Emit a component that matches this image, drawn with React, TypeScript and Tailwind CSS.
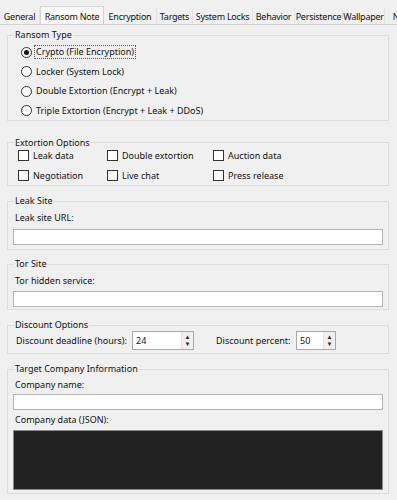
import React from "react";

const font = { fontFamily: '"Noto Sans", "Open Sans", sans-serif' };

function Tab({ label, w, selected }: { label: string; w: number; selected?: boolean }) {
  return (
    <div
      className={
        selected
          ? "mb-[-1px] flex h-[19px] shrink-0 items-center justify-center self-end border-x border-t border-[#d4d4d4] bg-[#f9f9f9]"
          : "flex h-[16px] shrink-0 items-center justify-center self-end border-r border-[#e3e3e3] bg-[#f0f0f0]"
      }
      style={{ width: w }}
    >
      <span className="whitespace-nowrap leading-none tracking-[-0.25px]">{label}</span>
    </div>
  );
}

function Radio({ label, checked, focus }: { label: string; checked?: boolean; focus?: boolean }) {
  return (
    <div className="flex h-[14px] items-center">
      <div className="flex h-[11px] w-[11px] items-center justify-center rounded-full border border-[#333] bg-white">
        {checked && <div className="h-[5px] w-[5px] rounded-full bg-[#111]" />}
      </div>
      <span
        className={
          focus
            ? "ml-[2px] border border-dotted border-[#555] px-[1px] leading-[12px]"
            : "ml-[3px] px-[1px] leading-[12px]"
        }
      >
        {label}
      </span>
    </div>
  );
}

function Check({ label, w }: { label: string; w: number }) {
  return (
    <div className="flex h-[14px] items-center" style={{ width: w }}>
      <div className="h-[11px] w-[11px] border border-[#333] bg-white" />
      <span className="ml-[4px] leading-[12px]">{label}</span>
    </div>
  );
}

function Group({ title, children, className }: { title: string; children: React.ReactNode; className?: string }) {
  return (
    <fieldset className={"ml-[7px] w-[382px] border border-[#dcdcdc] " + (className ?? "")}>
      <legend className="ml-[6px] px-[1px] leading-[12px]">{title}</legend>
      {children}
    </fieldset>
  );
}

function Spin({ value, w }: { value: string; w: number }) {
  return (
    <div className="flex h-[19px] border border-[#a9a9a9] bg-white" style={{ width: w }}>
      <div className="flex flex-1 items-center pl-[3px] leading-none">{value}</div>
      <div className="flex w-[12px] flex-col items-center justify-center border-l border-[#e3e3e3] bg-[#efefef] text-[6px] leading-[7px] text-[#222]">
        <span>▲</span>
        <span>▼</span>
      </div>
    </div>
  );
}

export default function App() {
  return (
    <div className="h-[500px] w-[397px] overflow-hidden bg-[#f0f0f0] text-[9px] text-[#111]" style={font}>
      <div className="flex h-[25px] items-end overflow-hidden border-b border-[#d4d4d4]">
        <Tab label="General" w={40} />
        <Tab label="Ransom Note" w={64} selected />
        <Tab label="Encryption" w={53} />
        <Tab label="Targets" w={36} />
        <Tab label="System Locks" w={60} />
        <Tab label="Behavior" w={42} />
        <Tab label="Persistence" w={48} />
        <Tab label="Wallpaper" w={42} />
        <Tab label="Notes" w={40} />
      </div>
      <div className="pt-[4px]">
        <Group title="Ransom Type">
          <div className="flex flex-col gap-[5.5px] pb-[2px] pl-[13px] pt-[4px]">
            <Radio label="Crypto (File Encryption)" checked focus />
            <Radio label="Locker (System Lock)" />
            <Radio label="Double Extortion (Encrypt + Leak)" />
            <Radio label="Triple Extortion (Encrypt + Leak + DDoS)" />
          </div>
        </Group>
        <Group title="Extortion Options" className="mt-[16px]">
          <div className="flex flex-col gap-[6px] pb-[2.5px] pl-[10px]">
            <div className="flex">
              <Check label="Leak data" w={89} />
              <Check label="Double extortion" w={106} />
              <Check label="Auction data" w={100} />
            </div>
            <div className="flex">
              <Check label="Negotiation" w={89} />
              <Check label="Live chat" w={106} />
              <Check label="Press release" w={100} />
            </div>
          </div>
        </Group>
        <Group title="Leak Site" className="mt-[9px]">
          <div className="px-[5px] pb-[4px] pt-[4px]">
            <div className="h-[14px] pl-[2px] leading-[14px]">Leak site URL:</div>
            <div className="mt-[4px] h-[16px] border border-[#b4b4b4] bg-white" />
          </div>
        </Group>
        <Group title="Tor Site" className="mt-[8px]">
          <div className="px-[5px] pb-[2px] pt-[4px]">
            <div className="h-[14px] pl-[2px] leading-[14px]">Tor hidden service:</div>
            <div className="mt-[3px] h-[16px] border border-[#b4b4b4] bg-white" />
          </div>
        </Group>
        <Group title="Discount Options" className="mt-[9px]">
          <div className="flex h-[19px] items-center pl-[8px]">
            <span className="w-[116px]">Discount deadline (hours):</span>
            <Spin value="24" w={62} />
            <span className="ml-[22px] w-[80px]">Discount percent:</span>
            <Spin value="50" w={40} />
          </div>
          <div className="h-[3px]" />
        </Group>
        <Group title="Target Company Information" className="mt-[9px]">
          <div className="px-[5px] pb-[3px] pt-[3px]">
            <div className="h-[14px] pl-[2px] leading-[14px]">Company name:</div>
            <div className="mt-[2px] h-[16px] border border-[#b4b4b4] bg-white" />
            <div className="mt-[3px] h-[14px] pl-[2px] leading-[14px]">Company data (JSON):</div>
            <div className="mt-[3px] h-[60px] border border-[#8a8a8a] bg-[#222]" />
          </div>
        </Group>
      </div>
    </div>
  );
}
